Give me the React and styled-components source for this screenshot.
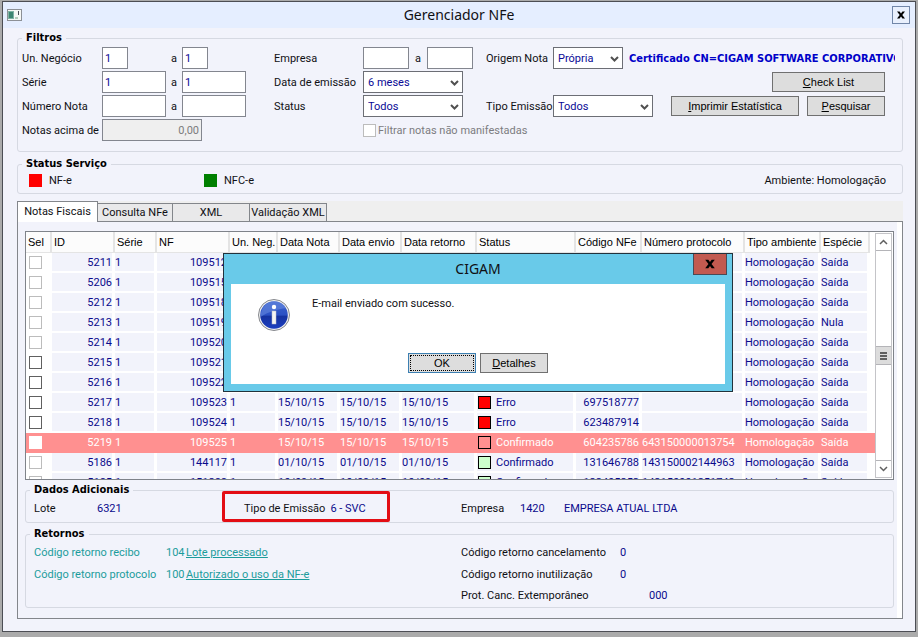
import React from "react";
import styled, { createGlobalStyle, css } from "styled-components";

const GlobalStyle = createGlobalStyle`
  *,
  *::before,
  *::after {
    box-sizing: border-box;
  }

  body {
    margin: 0;
    background: #ababab;
    color: #101014;
    font-family: Roboto, sans-serif;
    font-size: 11px;
    line-height: 15px;
  }

  button,
  input,
  select {
    font: inherit;
    margin: 0;
  }
`;

const Window = styled.main`
  position: relative;
  margin: 1px 2px 5px;
  border: 1px solid #4c4e54;
  background: #f2f3fb;
`;

const TitleBar = styled.header`
  display: grid;
  grid-template-columns: 20px 1fr 20px;
  align-items: center;
  height: 26px;
  padding: 0 3px;
  background: #e5eeff;
`;

const WindowTitle = styled.h1`
  margin: 0;
  font-family: "Noto Sans", sans-serif;
  font-size: 14px;
  font-weight: 400;
  line-height: 20px;
  text-align: center;
`;

const CloseButton = styled.button`
  display: flex;
  align-items: center;
  justify-content: center;
  width: 18px;
  height: 18px;
  padding: 0;
  border: 1px solid #7186a8;
  background: #e9f0fd;
`;

const Content = styled.div`
  padding: 3px 12px 12px 14px;
`;

const Group = styled.fieldset`
  min-width: 0;
  margin: 0 0 ${(p) => p.$after || 0}px;
  padding: ${(p) => p.$pad};
  border: 1px solid #d6d9e2;
  border-radius: 3px;

  > legend {
    padding: 0 4px;
    color: #000;
    font-family: "DejaVu Sans Condensed", "DejaVu Sans", sans-serif;
    font-weight: 700;
    line-height: 14px;
  }
`;

const Filters = styled.div`
  display: grid;
  grid-template-columns: 224px 199px minmax(0, 1fr);
  column-gap: 28px;
`;

const FilterColumn = styled.div`
  display: grid;
  grid-auto-rows: 22px;
  row-gap: 2px;
  margin-left: ${(p) => (p.$near ? "-15px" : "0")};
`;

const FilterRow = styled.div`
  display: grid;
  grid-template-columns: ${(p) => p.$cols};
  align-items: center;
  white-space: nowrap;
`;

const TextInput = styled.input`
  width: ${(p) => p.$width}px;
  height: 22px;
  padding: 0 2px;
  border: 1px solid #83868f;
  border-radius: 0;
  background: #fff;
  color: #0a0a96;

  &:disabled {
    background: #efefef;
    color: #7c7c7c;
    text-align: right;
  }
`;

const Until = styled.label`
  text-align: center;
`;

const SelectBox = styled.div`
  position: relative;
  width: ${(p) => p.$width}px;

  select {
    appearance: none;
    display: block;
    width: 100%;
    height: 22px;
    padding: 0 18px 0 4px;
    border: 1px solid #6c6e75;
    border-radius: 0;
    background: #fff;
    color: #0a0a96;
  }

  svg {
    position: absolute;
    top: 9px;
    right: 4px;
    pointer-events: none;
  }
`;

const Certificate = styled.output`
  overflow: hidden;
  margin-left: 6px;
  color: #0000c8;
  font-family: "DejaVu Sans Condensed", "DejaVu Sans", sans-serif;
  font-weight: 700;
`;

const ButtonRow = styled.div`
  display: flex;
  align-items: center;
  justify-content: flex-end;
  gap: 8px;
  padding-right: 10px;
`;

const Button = styled.button`
  width: ${(p) => p.$width}px;
  height: 20px;
  padding: 0;
  border: 1px solid #707070;
  background: #dddddd;
  color: #000;
  font-family: "Liberation Sans", sans-serif;
  font-size: 11px;
  line-height: 14px;

  ${(p) =>
    p.$primary &&
    css`
      border-color: #3c7fb1;
      outline: 1px dotted #000;
      outline-offset: -3px;
    `}
`;

const Check = styled.input`
  appearance: none;
  display: block;
  width: 13px;
  height: 13px;
  border: 1px solid #606060;
  background: #fff;

  &:disabled {
    border-color: #bcbcbc;
  }
`;

const CheckLabel = styled.label`
  display: flex;
  align-items: center;
  gap: 2px;
  padding-left: 89px;
  color: #7c7c80;
  white-space: nowrap;
`;

const StatusRow = styled.div`
  display: grid;
  grid-template-columns: 175px 1fr auto;
  padding: 0 12px 0 7px;
`;

const ServiceStatus = styled.span`
  display: flex;
  align-items: center;
  gap: 7px;
`;

const Square = styled.i`
  flex: none;
  width: 13px;
  height: 13px;
  background: ${(p) => p.$color};
  border: ${(p) => (p.$outlined ? "1px solid #000" : "0")};
`;

const TabStrip = styled.div`
  display: flex;
  align-items: flex-end;
  height: 20px;
  background: #efefef;
`;

const Tab = styled.button`
  position: relative;
  width: ${(p) => p.$width}px;
  height: 18px;
  padding: 0;
  border: 1px solid #83868b;
  border-width: 1px 1px 0 0;
  background: #e9e9ea;
  color: #101014;
  white-space: nowrap;

  &[aria-selected="true"] {
    height: 21px;
    margin-bottom: -1px;
    padding-bottom: 1px;
    border-left-width: 1px;
    background: #fff;
    z-index: 1;
  }
`;

const Panel = styled.section`
  padding-right: 5px;
  border: 1px solid #83868b;
  background: #fff;
`;

const PanelBody = styled.div`
  padding: 9px 3px 10px 7px;
  background: #f2f3fb;
`;

const GridBox = styled.div`
  display: grid;
  grid-template-columns: minmax(0, 1fr) 18px;
  height: 249px;
  margin-bottom: 3px;
  border: 1px solid #7f838a;
  background: #fff;
  overflow: hidden;
`;

const GridView = styled.div`
  overflow: hidden;
`;

const Table = styled.table`
  width: 100%;
  border-collapse: separate;
  border-spacing: 0;
  table-layout: fixed;
`;

const HeadCell = styled.th`
  height: 21px;
  padding: 0 0 0 2px;
  border-right: 2px solid #e4e4e4;
  border-bottom: 1px solid #e4e4e4;
  background: #fcfcfc;
  color: #000;
  font-family: "Liberation Sans", sans-serif;
  font-weight: 400;
  text-align: left;
  white-space: nowrap;
`;

const Cell = styled.td`
  height: 20px;
  padding: 0;
  border: solid #fff;
  border-width: 0 3px 2px 0;
  background: ${(p) => (p.$plain ? "#fff" : "#f2f3fb")};
  color: #0a0a8c;
  text-align: ${(p) => p.$align || "left"};
  white-space: nowrap;
`;

const Row = styled.tr`
  ${Check} {
    margin-left: 3px;
  }

  ${(p) =>
    p.$selected &&
    css`
      ${Cell} {
        border-color: #ff9090;
        background: #ff9090;
        color: #fff;
      }

      ${Check} {
        border-color: #fff;
      }
    `}
`;

const StatusValue = styled.span`
  display: flex;
  align-items: center;
  gap: 5px;
  padding-left: 1px;
`;

const ScrollBar = styled.div`
  display: grid;
  grid-template-rows: 17px 95px 19px 1fr 17px;
  margin: 1px 1px 1px 0;
  border: 1px solid #c4c4c8;
  background: #fff;
`;

const ScrollPart = styled.span`
  display: flex;
  align-items: center;
  justify-content: center;
  border: solid #b4b4b8;
  border-width: ${(p) => p.$edges};
  background: ${(p) => (p.$thumb ? "#dcdcdc" : "#fff")};
`;

const ExtraRow = styled.div`
  display: grid;
  grid-template-columns: 63px 125px 239px 59px 44px 1fr;
  padding-left: 4px;
`;

const Value = styled.output`
  color: #0a0a8c;
`;

const Highlighted = styled.span`
  position: relative;
  display: flex;
  gap: 5px;
  justify-self: start;
  width: 168px;
  padding-left: 22px;

  &::before {
    content: "";
    position: absolute;
    inset: -10px 0 -6px;
    border: 3px solid #e30d14;
    border-radius: 2px;
  }
`;

const Returns = styled.div`
  display: grid;
  grid-template-columns: 132px 20px 275px 159px 29px 1fr;
  grid-template-rows: 22px 22px 20px;
  align-items: center;
  padding-left: 4px;
`;

const Teal = styled.span`
  grid-column: ${(p) => p.$col};
  color: #1c9c9c;
`;

const TealLink = styled.a`
  justify-self: start;
  color: #1c9c9c;
  text-decoration: underline;
`;

const ReturnLabel = styled.span`
  grid-column: 4;
`;

const ReturnValue = styled(Value)`
  grid-column: ${(p) => (p.$far ? 6 : 5)};
`;

const Dialog = styled.div`
  position: absolute;
  top: 251px;
  left: 220px;
  z-index: 5;
  width: 510px;
  padding: 0 7px 7px;
  border: 1px solid #22323c;
  background: #69cae9;
`;

const DialogTitle = styled.h2`
  margin: 0;
  font-family: "Noto Sans", sans-serif;
  font-size: 14px;
  font-weight: 400;
  line-height: 30px;
  text-align: center;
`;

const DialogClose = styled.button`
  position: absolute;
  top: 0;
  right: 5px;
  display: flex;
  align-items: center;
  justify-content: center;
  width: 34px;
  height: 21px;
  padding: 0;
  border: 1px solid #4a4a55;
  border-top: 0;
  background: #c25a50;
`;

const DialogBody = styled.div`
  display: grid;
  grid-template-columns: 54px 1fr;
  padding: 12px 27px 11px;
  background: #fff;

  svg {
    margin-top: 3px;
  }

  p {
    margin: 0;
  }
`;

const DialogActions = styled.div`
  display: flex;
  grid-column: 1 / -1;
  justify-content: center;
  gap: 4px;
  margin-top: 22px;
`;

function Cross({ size }) {
  return (
    <svg width={size} height={size} viewBox="0 0 10 10" aria-hidden="true">
      <path d="M1 1.5h2.6L5 3.4l1.400-1.900H9L6.300 5 9 8.500H6.400L5 6.600 3.600 8.500H1L3.700 5z" fill="#000" />
    </svg>
  );
}

function Chevron() {
  return (
    <svg width="9" height="6" viewBox="0 0 9 6" aria-hidden="true">
      <path d="M1 1l3.500 3.500L8 1" fill="none" stroke="#505050" strokeWidth="2" />
    </svg>
  );
}

function Arrow({ up }) {
  return (
    <svg width="9" height="6" viewBox="0 0 9 6" aria-hidden="true">
      <path d={up ? "M1 5l3.500-3.500L8 5" : "M1 1l3.500 3.500L8 1"} fill="none" stroke="#606060" strokeWidth="1.500" />
    </svg>
  );
}

function AppIcon() {
  return (
    <svg width="16" height="14" viewBox="0 0 16 14" aria-hidden="true">
      <rect x="1.500" y="1.500" width="14" height="11" fill="#f6f8f6" stroke="#8c9096" />
      <rect x="2" y="3" width="6" height="8" fill="#7fb2a4" />
      <rect x="3" y="4" width="4" height="6" fill="#3d8673" />
      <rect x="9" y="9" width="3" height="2" fill="#b5cdbd" />
      <rect x="12" y="3" width="1" height="4" fill="#4a4e58" />
    </svg>
  );
}

function InfoIcon() {
  return (
    <svg width="32" height="32" viewBox="0 0 32 32" aria-hidden="true">
      <defs>
        <linearGradient id="ball" x1="0" y1="0" x2="0" y2="1">
          <stop offset="0" stopColor="#3c62cc" />
          <stop offset="0.500" stopColor="#2a50c4" />
          <stop offset="0.550" stopColor="#1532a0" />
          <stop offset="1" stopColor="#1c3fc0" />
        </linearGradient>
      </defs>
      <circle cx="16" cy="16" r="15.500" fill="#f0f0f0" stroke="#85878c" />
      <circle cx="16" cy="16" r="13.800" fill="url(#ball)" />
      <path d="M2.500 18C3 8 9 2.500 16 2.300c6 0 10 3 12 7C20 10 10 13 2.500 18z" fill="#6f92e4" opacity="0.500" />
      <circle cx="16" cy="8" r="2.200" fill="#fff" />
      <rect x="14" y="12" width="4" height="13" fill="#f4f4f4" stroke="#b9bcc8" strokeWidth="0.500" />
    </svg>
  );
}

function Select({ id, width, value }) {
  return (
    <SelectBox $width={width}>
      <select id={id} defaultValue={value}>
        <option>{value}</option>
      </select>
      <Chevron />
    </SelectBox>
  );
}

function Range({ label, id, from, to, width, cols }) {
  return (
    <FilterRow $cols={cols}>
      <label htmlFor={id}>{label}</label>
      <TextInput id={id} $width={width} defaultValue={from} />
      <Until htmlFor={`${id}-ate`}>a</Until>
      <TextInput id={`${id}-ate`} $width={width} defaultValue={to} />
    </FilterRow>
  );
}

const columns = [
  ["Sel", 26],
  ["ID", 63],
  ["Série", 42],
  ["NF", 73],
  ["Un. Neg.", 48],
  ["Data Nota", 62],
  ["Data envio", 62],
  ["Data retorno", 75],
  ["Status", 99],
  ["Código NFe", 66],
  ["Número protocolo", 103],
  ["Tipo ambiente", 76],
  ["Espécie", 49],
];

const invoices = [
  { id: "5211", nf: "109512", date: "15/10/15", status: "Erro", locked: true },
  { id: "5206", nf: "109515", date: "15/10/15", status: "Erro", locked: true },
  { id: "5212", nf: "109518", date: "15/10/15", status: "Erro", locked: true },
  { id: "5213", nf: "109519", date: "15/10/15", status: "Erro", locked: true, kind: "Nula" },
  { id: "5214", nf: "109520", date: "15/10/15", status: "Erro", locked: true },
  { id: "5215", nf: "109521", date: "15/10/15", status: "Erro" },
  { id: "5216", nf: "109522", date: "15/10/15", status: "Erro" },
  { id: "5217", nf: "109523", date: "15/10/15", status: "Erro", code: "697518777" },
  { id: "5218", nf: "109524", date: "15/10/15", status: "Erro", code: "623487914" },
  {
    id: "5219",
    nf: "109525",
    date: "15/10/15",
    status: "Confirmado",
    code: "604235786",
    protocol: "643150000013754",
    selected: true,
  },
  {
    id: "5186",
    nf: "144117",
    date: "01/10/15",
    status: "Confirmado",
    code: "131646788",
    protocol: "143150002144963",
    locked: true,
  },
  {
    id: "5185",
    nf: "151288",
    date: "10/09/15",
    status: "Confirmado",
    code: "133405353",
    protocol: "143150001351743",
    locked: true,
  },
];

function squareColor(invoice) {
  if (invoice.selected) return "transparent";
  return invoice.status === "Erro" ? "#ff0000" : "#ccffcc";
}

function InvoiceRow({ invoice }) {
  return (
    <Row $selected={invoice.selected}>
      <Cell $plain>
        <Check type="checkbox" aria-label={`Sel ${invoice.id}`} disabled={invoice.locked} />
      </Cell>
      <Cell $align="right">{invoice.id}</Cell>
      <Cell>1</Cell>
      <Cell $align="right">{invoice.nf}</Cell>
      <Cell>1</Cell>
      <Cell>{invoice.date}</Cell>
      <Cell>{invoice.date}</Cell>
      <Cell>{invoice.date}</Cell>
      <Cell>
        <StatusValue>
          <Square $color={squareColor(invoice)} $outlined />
          {invoice.status}
        </StatusValue>
      </Cell>
      <Cell $align="right">{invoice.code}</Cell>
      <Cell>{invoice.protocol}</Cell>
      <Cell>Homologação</Cell>
      <Cell>{invoice.kind || "Saída"}</Cell>
      <Cell $plain />
    </Row>
  );
}

export default function App() {
  return (
    <>
      <GlobalStyle />
      <Window>
        <TitleBar>
          <AppIcon />
          <WindowTitle>Gerenciador NFe</WindowTitle>
          <CloseButton aria-label="Fechar">
            <Cross size={10} />
          </CloseButton>
        </TitleBar>

        <Content>
          <Group $pad="2px 7px 10px 4px" $after={5}>
            <legend>Filtros</legend>
            <Filters>
              <FilterColumn>
                <Range label="Un. Negócio" id="negocio" from="1" to="1" width={26} cols="80px 64px 16px 64px" />
                <Range label="Série" id="serie" from="1" to="1" width={64} cols="80px 64px 16px 64px" />
                <Range label="Número Nota" id="numero" width={64} cols="80px 64px 16px 64px" />
                <FilterRow $cols="80px 100px">
                  <label htmlFor="acima">Notas acima de</label>
                  <TextInput id="acima" $width={100} defaultValue="0,00" disabled />
                </FilterRow>
              </FilterColumn>

              <FilterColumn>
                <Range label="Empresa" id="empresa" width={46} cols="89px 46px 18px 46px" />
                <FilterRow $cols="89px 100px">
                  <label htmlFor="data">Data de emissão</label>
                  <Select id="data" width={100} value="6 meses" />
                </FilterRow>
                <FilterRow $cols="89px 100px">
                  <label htmlFor="status">Status</label>
                  <Select id="status" width={100} value="Todos" />
                </FilterRow>
                <CheckLabel>
                  <Check type="checkbox" disabled />
                  Filtrar notas não manifestadas
                </CheckLabel>
              </FilterColumn>

              <FilterColumn $near>
                <FilterRow $cols="67px 70px minmax(0, 1fr)">
                  <label htmlFor="origem">Origem Nota</label>
                  <Select id="origem" width={70} value="Própria" />
                  <Certificate>Certificado CN=CIGAM SOFTWARE CORPORATIVO</Certificate>
                </FilterRow>
                <ButtonRow>
                  <Button $width={113}>
                    <u>C</u>heck List
                  </Button>
                </ButtonRow>
                <FilterRow $cols="67px 100px minmax(0, 1fr)">
                  <label htmlFor="tipo">Tipo Emissão</label>
                  <Select id="tipo" width={100} value="Todos" />
                  <ButtonRow>
                    <Button $width={128}>
                      <u>I</u>mprimir Estatística
                    </Button>
                    <Button $width={78}>
                      <u>P</u>esquisar
                    </Button>
                  </ButtonRow>
                </FilterRow>
              </FilterColumn>
            </Filters>
          </Group>

          <Group $pad="2px 4px 5px" $after={7}>
            <legend>Status Serviço</legend>
            <StatusRow>
              <ServiceStatus>
                <Square $color="#ff0000" />
                NF-e
              </ServiceStatus>
              <ServiceStatus>
                <Square $color="#008000" />
                NFC-e
              </ServiceStatus>
              <span>Ambiente: Homologação</span>
            </StatusRow>
          </Group>

          <TabStrip role="tablist">
            <Tab role="tab" aria-selected="true" $width={81}>
              Notas Fiscais
            </Tab>
            <Tab role="tab" $width={75}>
              Consulta NFe
            </Tab>
            <Tab role="tab" $width={77}>
              XML
            </Tab>
            <Tab role="tab" $width={77}>
              Validação XML
            </Tab>
          </TabStrip>

          <Panel>
            <PanelBody>
              <GridBox>
                <GridView>
                  <Table>
                    <colgroup>
                      {columns.map(([name, width]) => (
                        <col key={name} style={{ width }} />
                      ))}
                      <col />
                    </colgroup>
                    <thead>
                      <tr>
                        {columns.map(([name]) => (
                          <HeadCell key={name}>{name}</HeadCell>
                        ))}
                        <td />
                      </tr>
                    </thead>
                    <tbody>
                      {invoices.map((invoice) => (
                        <InvoiceRow key={invoice.id} invoice={invoice} />
                      ))}
                    </tbody>
                  </Table>
                </GridView>
                <ScrollBar aria-hidden="true">
                  <ScrollPart $edges="0 0 1px">
                    <Arrow up />
                  </ScrollPart>
                  <span />
                  <ScrollPart $thumb $edges="1px 0">
                    <svg width="7" height="8" viewBox="0 0 7 8">
                      <path d="M0 1h7M0 4h7M0 7h7" stroke="#606060" strokeWidth="2" />
                    </svg>
                  </ScrollPart>
                  <span />
                  <ScrollPart $edges="1px 0 0">
                    <Arrow />
                  </ScrollPart>
                </ScrollBar>
              </GridBox>

              <Group $pad="4px 4px 6px" $after={4}>
                <legend>Dados Adicionais</legend>
                <ExtraRow>
                  <span>Lote</span>
                  <Value>6321</Value>
                  <Highlighted>
                    Tipo de Emissão
                    <Value>6 - SVC</Value>
                  </Highlighted>
                  <span>Empresa</span>
                  <Value>1420</Value>
                  <Value>EMPRESA ATUAL LTDA</Value>
                </ExtraRow>
              </Group>

              <Group $pad="0 4px 2px">
                <legend>Retornos</legend>
                <Returns>
                  <Teal>Código retorno recibo</Teal>
                  <Teal>104</Teal>
                  <TealLink href="#recibo">Lote processado</TealLink>
                  <ReturnLabel>Código retorno cancelamento</ReturnLabel>
                  <ReturnValue>0</ReturnValue>
                  <Teal $col={1}>Código retorno protocolo</Teal>
                  <Teal>100</Teal>
                  <TealLink href="#protocolo">Autorizado o uso da NF-e</TealLink>
                  <ReturnLabel>Código retorno inutilização</ReturnLabel>
                  <ReturnValue>0</ReturnValue>
                  <ReturnLabel>Prot. Canc. Extemporâneo</ReturnLabel>
                  <ReturnValue $far>000</ReturnValue>
                </Returns>
              </Group>
            </PanelBody>
          </Panel>
        </Content>

        <Dialog role="dialog" aria-labelledby="dialog-title">
          <DialogTitle id="dialog-title">CIGAM</DialogTitle>
          <DialogClose aria-label="Fechar aviso">
            <Cross size={12} />
          </DialogClose>
          <DialogBody>
            <InfoIcon />
            <p>E-mail enviado com sucesso.</p>
            <DialogActions>
              <Button $width={68} $primary>
                OK
              </Button>
              <Button $width={68}>
                <u>D</u>etalhes
              </Button>
            </DialogActions>
          </DialogBody>
        </Dialog>
      </Window>
    </>
  );
}
